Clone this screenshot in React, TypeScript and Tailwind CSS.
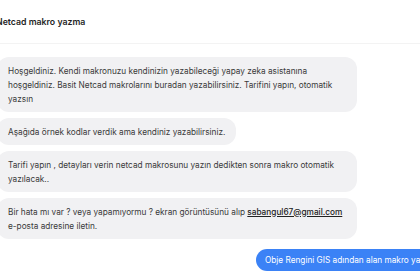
import React from 'react';

const botMessages: React.ReactNode[] = [
  'Hoşgeldiniz. Kendi makronuzu kendinizin yazabileceği yapay zeka asistanına hoşgeldiniz. Basit Netcad makrolarını buradan yazabilirsiniz. Tarifini yapın, otomatik yazsın',
  'Aşağıda örnek kodlar verdik ama kendiniz yazabilirsiniz.',
  'Tarifi yapın , detayları verin netcad makrosunu yazın dedikten sonra makro otomatik yazılacak..',
  <>
    Bir hata mı var ? veya yapamıyormu ? ekran görüntüsünü alıp{' '}
    <span className="underline font-medium text-[#222]">sabangul67@gmail.com</span> e-posta adresine iletin.
  </>,
];

export default function App() {
  return (
    <div className="w-[420px] h-[280px] overflow-hidden bg-white font-['Inter',sans-serif] text-[#3a3a3a]">
      {/* Header */}
      <div className="h-[44px] flex items-center pt-[3px] border-b border-[#f3f3f3] -ml-[4px]">
        <span className="text-[8.75px] font-semibold text-[#1f1f1f]">Netcad makro yazma</span>
      </div>

      {/* Messages */}
      <div className="flex flex-col gap-[6px] pt-[13px] -ml-[3px]">
        {botMessages.map((m, i) => (
          <div key={i} className="flex">
            <div className="max-w-[360px] rounded-[12px] bg-[#f1f1f3] px-[11px] py-[6.5px] text-[8.25px] leading-[14px]">
              {m}
            </div>
          </div>
        ))}
        <div className="flex pl-[259px] pt-[4px]">
          <div className="whitespace-nowrap rounded-[12px] bg-[#3b82f6] px-[9px] py-[4px] text-[8.25px] leading-[14px] text-white">
            Obje Rengini GIS adından alan makro yazar mısın?
          </div>
        </div>
      </div>
    </div>
  );
}
